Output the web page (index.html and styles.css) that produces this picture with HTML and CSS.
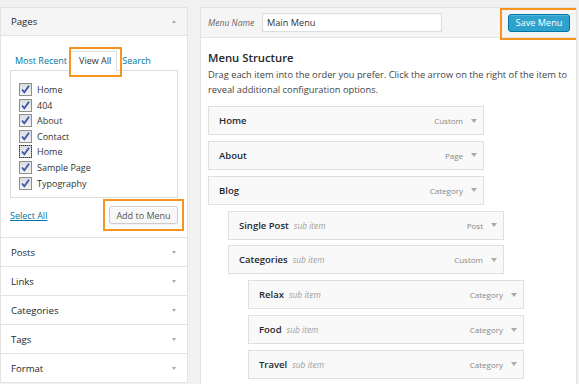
FILE: index.html
```html
<!DOCTYPE html>
<html lang="en">
<head>
<meta charset="utf-8">
<title>Menus</title>
<link rel="stylesheet" href="styles.css">
</head>
<body>
<div class="page">
  <aside class="side">
    <section class="acc open">
      <header class="acc-head">Pages <span class="tri tri-up"></span></header>
      <div class="acc-body">
        <div class="tabs">
          <a class="tab-link">Most Recent</a>
          <span class="tab-active">View All<span class="hl hl-tab"></span></span>
          <a class="tab-link">Search</a>
        </div>
        <ul class="list">
          <li><span class="cb"><svg viewBox="0 0 11 11" width="11" height="11"><path d="M2 5.5 L4.3 8.3 L9 1.8" fill="none" stroke="#3a55b0" stroke-width="1.8"/></svg></span>Home</li>
          <li><span class="cb"><svg viewBox="0 0 11 11" width="11" height="11"><path d="M2 5.5 L4.3 8.3 L9 1.8" fill="none" stroke="#3a55b0" stroke-width="1.8"/></svg></span>404</li>
          <li><span class="cb"><svg viewBox="0 0 11 11" width="11" height="11"><path d="M2 5.5 L4.3 8.3 L9 1.8" fill="none" stroke="#3a55b0" stroke-width="1.8"/></svg></span>About</li>
          <li><span class="cb"><svg viewBox="0 0 11 11" width="11" height="11"><path d="M2 5.5 L4.3 8.3 L9 1.8" fill="none" stroke="#3a55b0" stroke-width="1.8"/></svg></span>Contact</li>
          <li><span class="cb cb-focus"><svg viewBox="0 0 11 11" width="11" height="11"><path d="M2 5.5 L4.3 8.3 L9 1.8" fill="none" stroke="#3a55b0" stroke-width="1.8"/></svg></span>Home</li>
          <li><span class="cb"><svg viewBox="0 0 11 11" width="11" height="11"><path d="M2 5.5 L4.3 8.3 L9 1.8" fill="none" stroke="#3a55b0" stroke-width="1.8"/></svg></span>Sample Page</li>
          <li><span class="cb"><svg viewBox="0 0 11 11" width="11" height="11"><path d="M2 5.5 L4.3 8.3 L9 1.8" fill="none" stroke="#3a55b0" stroke-width="1.8"/></svg></span>Typography</li>
        </ul>
        <div class="actions">
          <a class="select-all">Select All</a>
          <span class="btn-wrap"><button class="btn">Add to Menu</button><span class="hl hl-add"></span></span>
        </div>
      </div>
    </section>
    <section class="acc"><header class="acc-head">Posts <span class="tri tri-down"></span></header></section>
    <section class="acc"><header class="acc-head">Links <span class="tri tri-down"></span></header></section>
    <section class="acc"><header class="acc-head">Categories <span class="tri tri-down"></span></header></section>
    <section class="acc"><header class="acc-head">Tags <span class="tri tri-down"></span></header></section>
    <section class="acc"><header class="acc-head">Format <span class="tri tri-down"></span></header></section>
  </aside>

  <main class="editor">
    <header class="editor-head">
      <label class="name-label">Menu Name</label>
      <span class="name-input">Main Menu</span>
      <span class="btn-wrap save-wrap"><button class="btn-primary">Save Menu</button><span class="hl hl-save"></span></span>
    </header>
    <div class="editor-body">
      <h3 class="title">Menu Structure</h3>
      <p class="desc">Drag each item into the order you prefer. Click the arrow on the right of the item to<br>reveal additional configuration options.</p>
      <ul class="menu">
        <li class="item d0"><span class="item-title">Home</span><span class="item-type">Custom</span><span class="tri tri-item"></span></li>
        <li class="item d0"><span class="item-title">About</span><span class="item-type">Page</span><span class="tri tri-item"></span></li>
        <li class="item d0"><span class="item-title">Blog</span><span class="item-type">Category</span><span class="tri tri-item"></span></li>
        <li class="item d1"><span class="item-title">Single Post</span><span class="sub">sub item</span><span class="item-type">Post</span><span class="tri tri-item"></span></li>
        <li class="item d1"><span class="item-title">Categories</span><span class="sub">sub item</span><span class="item-type">Custom</span><span class="tri tri-item"></span></li>
        <li class="item d2"><span class="item-title">Relax</span><span class="sub">sub item</span><span class="item-type">Category</span><span class="tri tri-item"></span></li>
        <li class="item d2"><span class="item-title">Food</span><span class="sub">sub item</span><span class="item-type">Category</span><span class="tri tri-item"></span></li>
        <li class="item d2"><span class="item-title">Travel</span><span class="sub">sub item</span><span class="item-type">Category</span><span class="tri tri-item"></span></li>
      </ul>
    </div>
  </main>
</div>
</body>
</html>
```

FILE: styles.css
```css
* { box-sizing: border-box; }
html, body { margin: 0; padding: 0; }
body {
  background: #f1f1f1;
  font-family: "Open Sans", "Noto Sans", "DejaVu Sans", sans-serif;
  color: #23282d;
  width: 579px;
  height: 384px;
  overflow: hidden;
}
.page {
  display: flex;
  align-items: flex-start;
  padding-top: 7px;
  height: 384px;
}

/* ---------- left column ---------- */
.side {
  width: 188px;
  flex: none;
  background: #fff;
  border: 1px solid #e3e3e3;
}
.acc { border-top: 1px solid #e3e3e3; }
.acc.open { border-top: none; }
.acc-head {
  height: 28px;
  display: flex;
  align-items: center;
  justify-content: space-between;
  padding: 0 11px 0 10px;
  font-size: 9.6px;
  color: #23282d;
}
.acc.open .acc-head {
  background: #f5f5f5;
  border-bottom: 1px solid #e3e3e3;
}
.tri {
  width: 0; height: 0;
  border-left: 2.5px solid transparent;
  border-right: 2.5px solid transparent;
}
.tri-down { border-top: 3px solid #aaa; }
.tri-up { border-bottom: 3px solid #aaa; }

.acc-body { padding: 15px 9px 13px 9px; }
.tabs {
  display: flex;
  align-items: flex-end;
  font-size: 9px;
  padding-left: 5px;
  position: relative;
  z-index: 1;
}
.tab-link { color: #0074a2; line-height: 19px; }
.tab-active {
  position: relative;
  margin: 0 5px -1px 3px;
  padding: 0 5px 0 8px;
  line-height: 18px;
  border: 1px solid #ddd;
  border-bottom: 1px solid #fff;
  background: #fff;
  color: #333;
}
.list {
  list-style: none;
  margin: 0;
  padding: 12px 8px 6px 8px;
  height: 128px;
  border: 1px solid #ddd;
  font-size: 9px;
  color: #333;
}
.list li {
  height: 15.6px;
  line-height: 13px;
  display: flex;
  align-items: flex-start;
}
.cb {
  width: 13px; height: 13px;
  border: 1px solid #8e8f8f;
  background: linear-gradient(#dcdcdc, #f4f4f4);
  display: inline-flex;
  align-items: center;
  justify-content: center;
  margin-right: 5px;
  flex: none;
}
.cb-focus { outline: 1px dotted #333; outline-offset: -1px; }

.actions {
  display: flex;
  justify-content: space-between;
  align-items: center;
  padding-top: 8px;
}
.select-all {
  color: #0074a2;
  font-size: 9px;
  text-decoration: underline;
}
.btn-wrap { position: relative; display: inline-flex; }
.btn {
  font-family: inherit;
  font-size: 9px;
  color: #555;
  background: #f7f7f7;
  border: 1px solid #ccc;
  border-radius: 3px;
  height: 18px;
  width: 69px;
  padding: 0;
  box-shadow: inset 0 1px 0 #fff, 0 1px 0 rgba(0,0,0,.05);
}
.hl {
  position: absolute;
  border: 2px solid #f7941d;
  pointer-events: none;
}
.hl-tab { left: -2px; right: -6px; top: -5px; bottom: -7px; }
.hl-add { left: -6px; right: -6px; top: -7px; bottom: -7px; }
.hl-save { left: -8px; right: -8px; top: -6px; bottom: -8px; }

/* ---------- right column ---------- */
.editor {
  margin-left: 12px;
  width: 377px;
  flex: none;
  align-self: stretch;
  background: #fff;
  border: 1px solid #e3e3e3;
  border-bottom: none;
  overflow: hidden;
}
.editor-head {
  height: 30px;
  background: #f5f5f5;
  border-bottom: 1px solid #e3e3e3;
  display: flex;
  align-items: center;
  padding: 0 6px 0 7px;
}
.name-label {
  font-size: 8.6px;
  font-style: italic;
  color: #666;
  width: 54px;
}
.name-input {
  width: 180px;
  height: 19px;
  border: 1px solid #ddd;
  background: #fff;
  font-size: 9.2px;
  color: #333;
  line-height: 17px;
  padding-left: 4px;
  box-shadow: inset 0 1px 2px rgba(0,0,0,.04);
}
.save-wrap { margin-left: auto; }
.btn-primary {
  font-family: inherit;
  font-size: 9.2px;
  color: #fff;
  background: #2ea2cc;
  border: 1px solid #0074a2;
  border-radius: 3px;
  height: 18px;
  width: 62px;
  padding: 0;
  box-shadow: inset 0 1px 0 rgba(120,200,230,.5);
}
.editor-body { padding: 12px 8px 0 7px; }
.title {
  margin: 0;
  font-size: 11.3px;
  font-weight: 600;
  line-height: 15px;
  color: #23282d;
}
.desc {
  margin: 2px 0 0;
  font-size: 9.3px;
  line-height: 15px;
  color: #444;
}
.menu {
  list-style: none;
  margin: 9px 0 0;
  padding: 0;
}
.item {
  width: 276px;
  height: 29px;
  margin-bottom: 5.85px;
  background: #f9f9f9;
  border: 1px solid #dfdfdf;
  display: flex;
  align-items: center;
  padding: 0 6px 0 10px;
}
.d1 { margin-left: 20px; }
.d2 { margin-left: 40px; }
.item-title {
  font-size: 9.5px;
  font-weight: 600;
  color: #23282d;
}
.sub {
  font-size: 8.4px;
  font-style: italic;
  color: #a0a0a0;
  margin-left: 5px;
}
.item-type {
  margin-left: auto;
  font-size: 8px;
  color: #888;
  margin-right: 8px;
}
.tri-item {
  border-left: 3px solid transparent;
  border-right: 3px solid transparent;
  border-top: 4px solid #aaa;
}
```
